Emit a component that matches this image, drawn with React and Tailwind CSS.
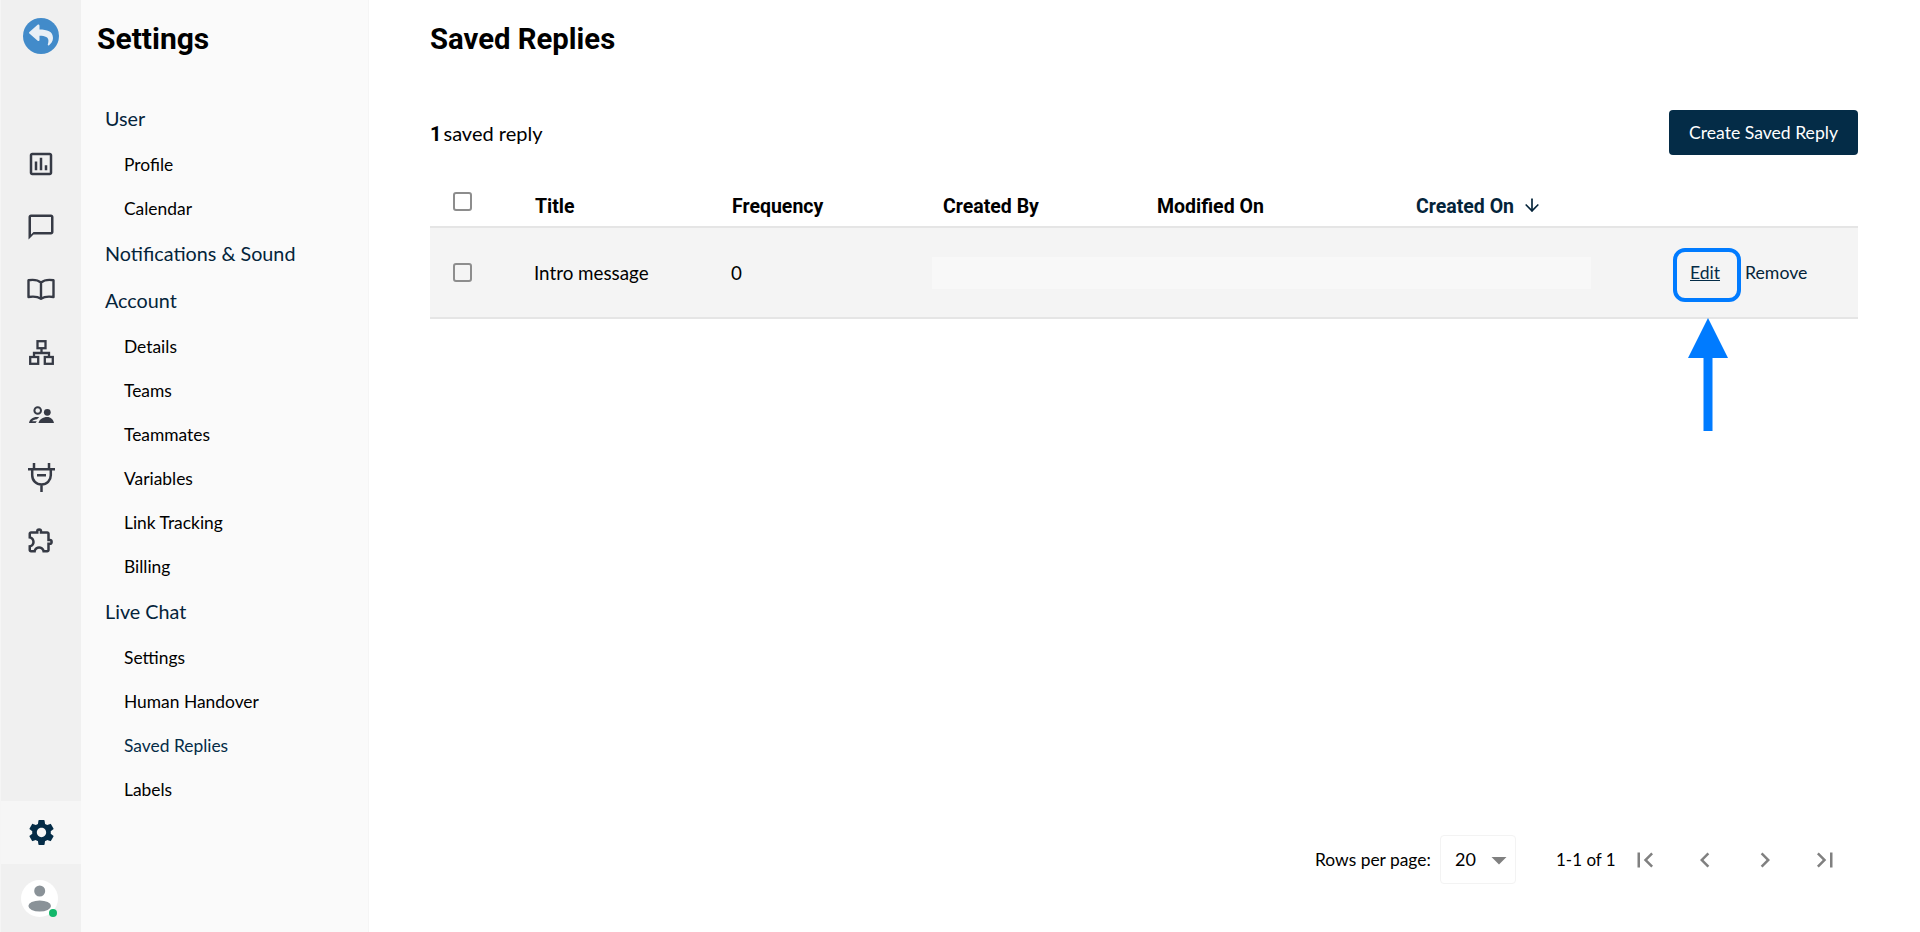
import { ArrowDown } from 'lucide-react';
import { FaReply } from 'react-icons/fa';
import {
  MdArrowDropDown,
  MdChatBubbleOutline,
  MdChevronLeft,
  MdChevronRight,
  MdFirstPage,
  MdLastPage,
  MdOutlineAssessment,
  MdOutlineExtension,
  MdSettings,
} from 'react-icons/md';

const lato = "font-['Lato','Liberation_Sans',sans-serif]";

const menu = [
  { group: 'User', items: ['Profile', 'Calendar'] },
  { group: 'Notifications & Sound', items: [] },
  { group: 'Account', items: ['Details', 'Teams', 'Teammates', 'Variables', 'Link Tracking', 'Billing'] },
  { group: 'Live Chat', items: ['Settings', 'Human Handover', 'Saved Replies', 'Labels'] },
];

function BookIcon() {
  return (
    <svg viewBox="0 0 28 22" className="w-7 h-[22px]" fill="none" stroke="#363a45" strokeWidth="2.4" strokeLinejoin="round">
      <path d="M14 4.500C11 2 6 1.500 1.500 2.200V19c4.500-.7 9.500-.3 12.500 1.700 3-2 8-2.400 12.500-1.700V2.200C22 1.500 17 2 14 4.500zM14 4.500v16" />
    </svg>
  );
}

function TreeIcon() {
  return (
    <svg viewBox="0 0 25 25" className="w-[25px] h-[25px]" fill="none" stroke="#363a45" strokeWidth="2.300">
      <rect x="8.500" y="1.200" width="8" height="7" />
      <rect x="1.200" y="17" width="8" height="6.800" />
      <rect x="15.800" y="17" width="8" height="6.800" />
      <path d="M12.500 8v5M5 17v-4h15v4" />
    </svg>
  );
}

function PeopleIcon() {
  return (
    <svg viewBox="0 0 25 17" className="w-[25px] h-[17px]" fill="#363a45">
      <circle cx="8.700" cy="4.500" r="3.300" fill="none" stroke="#363a45" strokeWidth="2" />
      <circle cx="18.300" cy="6.300" r="3.400" />
      <path d="M0 17c.6-3.500 3.600-6 7.800-6 .9 0 1.700.1 2.400.3L7.900 13.300c-2.200.1-3.900 1-4.800 1.900h4.700L6.600 17z" />
      <path d="M9.500 17c.8-3.600 4.300-6 8.800-6 3.400 0 5.900 2.400 6.700 6z" />
    </svg>
  );
}

function PlugIcon() {
  return (
    <svg viewBox="0 0 27 29" className="w-[27px] h-[29px]" fill="none" stroke="#363a45" strokeWidth="2.500">
      <path d="M6 0v6M21 0v6M0 6.200h27M4.200 6.200v6c0 5.300 4 9.300 9.300 9.300s9.300-4 9.300-9.300v-6M13.500 21.500V29M9 12.300h9" />
    </svg>
  );
}

function AvatarIcon() {
  return (
    <svg viewBox="0 0 37 37" className="w-[37px] h-[37px]" fill="#8a9298">
      <circle cx="18.700" cy="11" r="5.500" />
      <ellipse cx="18.700" cy="26" rx="11.300" ry="5.500" />
    </svg>
  );
}

function RailIcon({ children }) {
  return <div className="h-[62.6px] flex items-center justify-center text-[#363a45]">{children}</div>;
}

function Checkbox() {
  return <span className="block w-[19px] h-[19px] border-2 border-[#8d8d8d] rounded-[3px]" />;
}

export default function App() {
  return (
    <div className={`flex h-[932px] bg-white text-black ${lato}`}>
      <aside className="w-[81px] shrink-0 flex flex-col bg-[#f0f0f0] border-l border-[#f5f5f5]">
        <div className="h-[133px] pt-[18px] flex justify-center">
          <div className="w-9 h-9 rounded-full bg-[#428bca] flex items-center justify-center">
            <FaReply size={24} className="text-[#e8eff6] -mt-[2px]" />
          </div>
        </div>
        <RailIcon><MdOutlineAssessment size={30} /></RailIcon>
        <RailIcon><MdChatBubbleOutline size={30} /></RailIcon>
        <RailIcon><BookIcon /></RailIcon>
        <RailIcon><TreeIcon /></RailIcon>
        <RailIcon><PeopleIcon /></RailIcon>
        <RailIcon><PlugIcon /></RailIcon>
        <RailIcon><MdOutlineExtension size={30} /></RailIcon>
        <div className="mt-auto h-[63px] flex items-center justify-center bg-[#f6f6f6] text-[#042c47]">
          <MdSettings size={31} />
        </div>
        <div className="h-[68px] flex items-center justify-center">
          <div className="relative -ml-1 w-[37px] h-[37px] rounded-full bg-white">
            <AvatarIcon />
            <span className="absolute right-[1px] bottom-0 w-2 h-2 rounded-full bg-[#12b76a]" />
          </div>
        </div>
      </aside>

      <nav className="w-[288px] shrink-0 bg-[#fafafa] border-r border-[#f5f5f5] pl-4 pt-[19px]">
        <h2 className="font-['Roboto',sans-serif] font-bold text-[30px] leading-10 text-black">Settings</h2>
        <div className="mt-[36.6px] pl-2">
          {menu.map(({ group, items }) => (
            <div key={group}>
              <div className="h-[47px] flex items-center text-[19.75px] text-[#04243a]">{group}</div>
              {items.map((item) => (
                <div
                  key={item}
                  className={`h-11 pl-[19px] flex items-center text-[17.4px] ${item === 'Saved Replies' ? 'text-[#042c47]' : 'text-black'}`}
                >
                  {item}
                </div>
              ))}
            </div>
          ))}
        </div>
      </nav>

      <main className="flex-1 flex flex-col pl-[61px] pr-[62px] pt-[19px] pb-[48px]">
        <h1 className="font-['Roboto',sans-serif] font-bold text-[29.3px] leading-10">Saved Replies</h1>

        <div className="mt-[51px] h-[45px] flex items-center justify-between">
          <p className="text-[20px] pt-[2px]"><b className="font-bold font-['Roboto',sans-serif] mr-[2px]">1</b>saved reply</p>
          <button className="h-[45px] w-[189px] pt-[1px] bg-[#042c47] text-white rounded text-[17.6px]">Create Saved Reply</button>
        </div>

        <div className="mt-[20px] h-[53px] flex border-b-2 border-[#e5e5e5] font-['Roboto',sans-serif] font-bold text-[19.5px]">
          <div className="w-[105px] pl-[23px] pt-[17px]">
            <Checkbox />
          </div>
          <div className="w-[197px] pt-[17px]">Title</div>
          <div className="w-[211px] pt-[17px]">Frequency</div>
          <div className="w-[214px] pt-[17px]">Created By</div>
          <div className="w-[259px] pt-[17px]">Modified On</div>
          <div className="pt-[17px] flex items-start text-[#04243a]">
            Created On
            <ArrowDown size={20} strokeWidth={2} className="ml-2 mt-[3px]" />
          </div>
        </div>

        <div className="relative h-[91px] flex items-center bg-[#f4f4f4] border-b-2 border-[#e5e5e5] text-[18.8px]">
          <div className="w-[104px] pl-[23px]">
            <Checkbox />
          </div>
          <div className="w-[197px] mt-[2px]">Intro message</div>
          <div className="w-[201px] mt-[2px]">0</div>
          <div className="w-[659px] h-[32px] bg-[#f8f8f8]" />
          <div className="ml-[99px] mt-[2px] text-[17.5px] text-[#042c47] underline">Edit</div>
          <div className="ml-[25px] mt-[2px] text-[17.7px] text-[#04243a]">Remove</div>

          {/* annotation */}
          <div className="absolute left-[1243px] top-[20px] w-[68px] h-[54px] border-4 border-[#007bff] rounded-xl" />
          <svg viewBox="0 0 40 114" className="absolute left-[1258px] top-[90px] w-10 h-[114px]">
            <path d="M20 0 40 40H24.500v73h-9V40H0z" fill="#007bff" />
          </svg>
        </div>

        <div className="mt-auto h-[49px] flex items-center text-[17.4px]">
          <span className="ml-[885px] mt-[1px] w-[125px] whitespace-nowrap">Rows per page:</span>
          <div className="w-[76px] h-[49px] pl-[14px] flex items-center justify-between border border-[#f3f3f3] rounded text-[18px]">
            20
            <MdArrowDropDown size={36} className="shrink-0 text-[#808080] -mr-[2px]" />
          </div>
          <span className="ml-[40px] mt-[1px] w-[59px] text-[17px] whitespace-nowrap">1-1 of 1</span>
          <div className="flex text-[#808080]">
            <div className="w-[60px] flex justify-center"><MdFirstPage size={30} /></div>
            <div className="w-[60px] flex justify-center"><MdChevronLeft size={30} /></div>
            <div className="w-[60px] flex justify-center"><MdChevronRight size={30} /></div>
            <div className="w-[60px] flex justify-center"><MdLastPage size={30} /></div>
          </div>
        </div>
      </main>
    </div>
  );
}
